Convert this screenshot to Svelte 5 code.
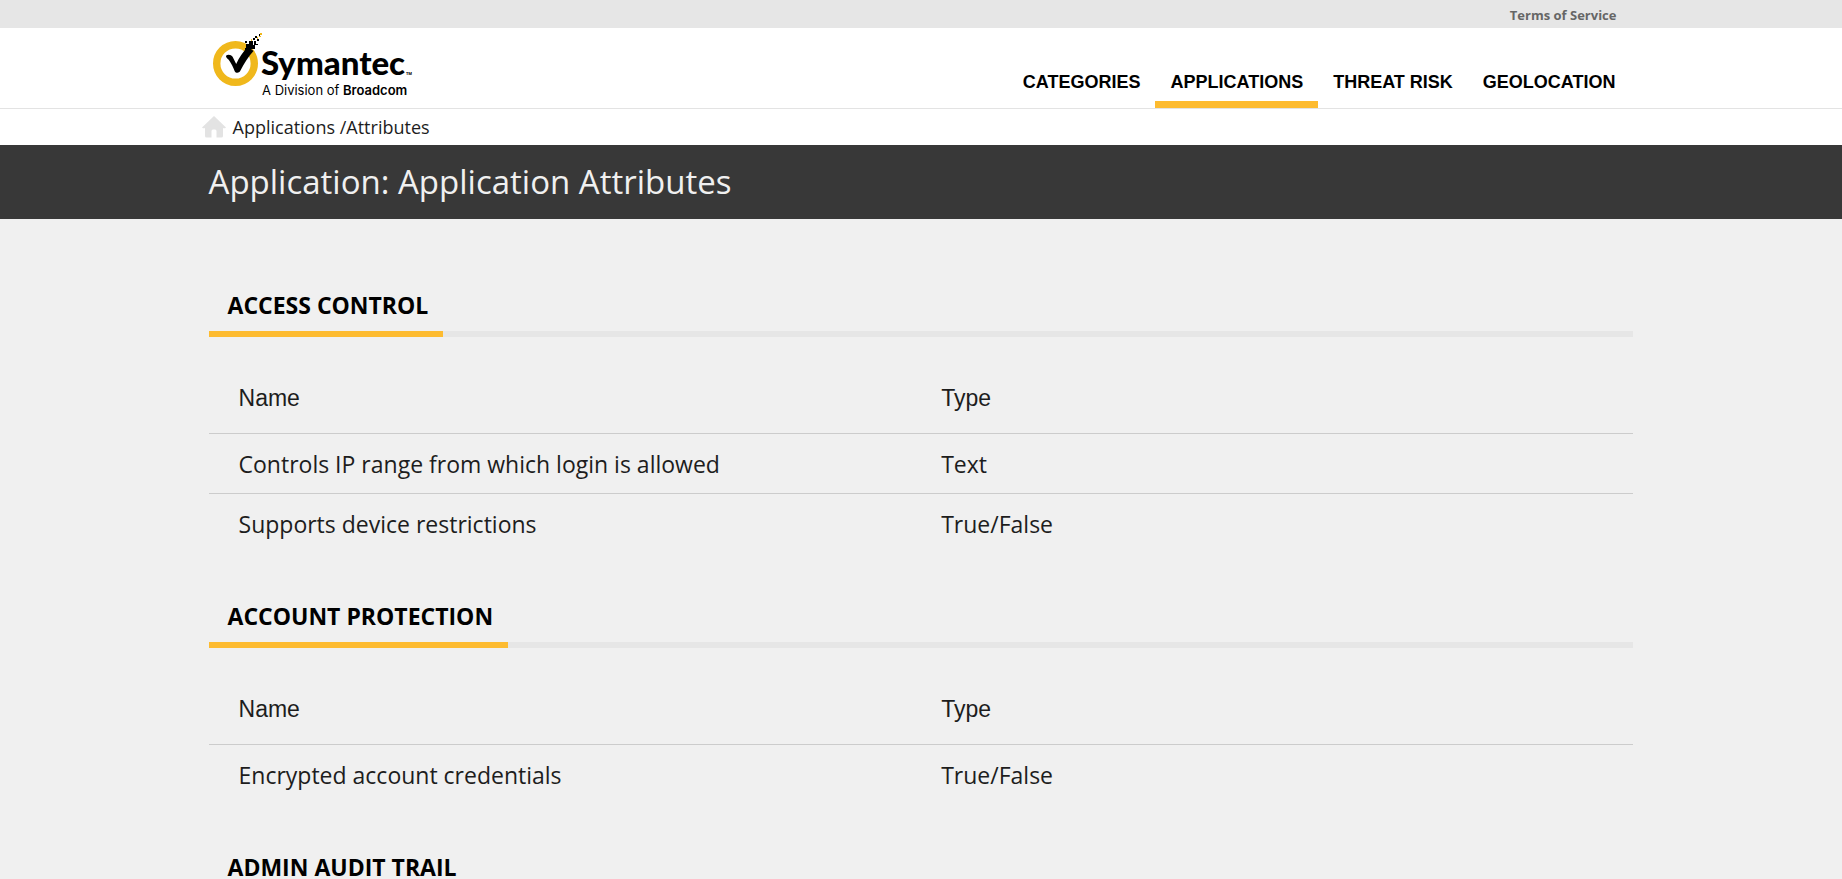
<script>
  const nav = [
    { label: 'CATEGORIES' },
    { label: 'APPLICATIONS', active: true },
    { label: 'THREAT RISK' },
    { label: 'GEOLOCATION' },
  ];

  const sections = [
    {
      title: 'ACCESS CONTROL',
      rows: [
        ['Controls IP range from which login is allowed', 'Text'],
        ['Supports device restrictions', 'True/False'],
      ],
    },
    {
      title: 'ACCOUNT PROTECTION',
      rows: [['Encrypted account credentials', 'True/False']],
    },
    { title: 'ADMIN AUDIT TRAIL', rows: [] },
  ];
</script>

<div class="page">
  <div class="topbar">
    <div class="wrap topbar-inner"><a href="#terms">Terms of Service</a></div>
  </div>

  <header>
    <div class="wrap header-inner">
      <a class="logo" href="#home" aria-label="Symantec, A Division of Broadcom">
        <svg width="206" height="72" viewBox="0 0 206 72">
          <circle cx="26.5" cy="35.500" r="18.8" fill="none" stroke="#f0b81c" stroke-width="7.4" />
          <path d="M17 27.800c1.600-1.700 5.200-1.400 6.600 1l3.600 7.200c3-6.800 6.500-11.500 11.800-17.500l5.500 4.500c-5.500 6-9 12-13.300 20-1.200 2.200-4.300 2.300-5.500.2-1.500-4-3.500-8.200-6-11.500-1.700-1.300-2.900-2.300-2.700-3.900z" fill="#000" />
          <g fill="#000">
            <rect x="37" y="16" width="4" height="4" /><rect x="40" y="13" width="4" height="4" />
            <rect x="41" y="17" width="5" height="4" /><rect x="36" y="20" width="6" height="3" />
            <rect x="45" y="13" width="2" height="4" /><rect x="44" y="10" width="2" height="2" />
            <rect x="48" y="11" width="2" height="2" /><rect x="46" y="8" width="2" height="2" />
            <rect x="36" y="13" width="2" height="2" /><rect x="47" y="16" width="2" height="1" />
            <rect x="50" y="6" width="1" height="2" />
          </g>
          <g fill="#f0b81c">
            <rect x="51" y="5" width="2" height="2" /><rect x="48" y="9" width="1" height="2" />
            <rect x="50" y="8" width="2" height="1" /><rect x="42" y="11" width="1" height="2" />
          </g>
          <text class="brand" x="52" y="47">Symantec</text>
          <text class="tm" x="197" y="47">TM</text>
          <text class="sub" x="53" y="67">A Division of <tspan class="strong">Broadcom</tspan></text>
        </svg>
      </a>
      <nav>
        {#each nav as item}
          <a href="#{item.label}" class:active={item.active}>{item.label}</a>
        {/each}
      </nav>
    </div>
  </header>

  <div class="crumbs">
    <div class="wrap crumbs-inner">
      <a href="#home" aria-label="Home">
        <svg width="24" height="22" viewBox="0 0 24 22">
          <path d="M12 0 24 11.500c-1 1-2 1-3 .6V20q0 1.500-1.500 1.500H14.500V15q0-1.500-1.500-1.500h-2Q9.500 13.500 9.500 15v6.500H4.500Q3 21.500 3 20v-7.900c-1 .4-2 .4-3-.6z" fill="#e3e3e3" />
        </svg>
      </a>
      <span><a href="#applications">Applications</a> /Attributes</span>
    </div>
  </div>

  <div class="title"><div class="wrap"><h1>Application: Application Attributes</h1></div></div>

  <main class="wrap">
    {#each sections as section}
      <section>
        <div class="tabline"><h2>{section.title}</h2></div>
        {#if section.rows.length}
          <table>
            <thead><tr><th>Name</th><th>Type</th></tr></thead>
            <tbody>
              {#each section.rows as row}
                <tr><td>{row[0]}</td><td>{row[1]}</td></tr>
              {/each}
            </tbody>
          </table>
        {/if}
      </section>
    {/each}
  </main>
</div>

<style>
  :global(body) { margin: 0; background: #f0f0f0; }
  .page {
    height: 100vh;
    overflow: hidden;
    font-family: "Open Sans", sans-serif;
    color: #1d1d1d;
  }
  .wrap { box-sizing: border-box; width: 77.360%; margin: 0 auto; }
  a { color: inherit; text-decoration: none; }
  .topbar { background: #e6e6e6; }
  .topbar-inner { display: flex; justify-content: flex-end; padding-right: 17px; }
  .topbar a { font-size: 13px; font-weight: 700; line-height: 28px; padding-top: 1px; margin-bottom: -1px; color: #666; }
  header { background: #fff; border-bottom: 1px solid #e3e3e3; }
  .header-inner { display: flex; justify-content: space-between; height: 80px; }
  .logo svg { display: block; }
  .brand { font: 900 33px Lato, sans-serif; }
  .tm { font: 700 4px "Open Sans", sans-serif; }
  .sub { font: 400 13px Inter, sans-serif; }
  .strong { font-weight: 600; }
  nav { display: flex; align-items: flex-end; padding-right: 3px; }
  nav a {
    padding: 0 15px 6px;
    border-bottom: 7px solid transparent;
    font: 700 18px/26px "Liberation Sans", Arial, sans-serif;
    color: #000;
  }
  nav a.active { border-color: #fdbb30; }
  .crumbs { background: #fff; }
  .crumbs-inner { display: flex; align-items: center; gap: 7px; height: 36px; }
  .crumbs-inner > a { margin-left: -7px; }
  .crumbs-inner svg { display: block; }
  .crumbs-inner span { font-size: 18px; line-height: 24px; }
  .title { background: #383838; }
  h1 { margin: 0; font: 400 33px/74px "Open Sans", sans-serif; color: #f0f0f0; }
  main { padding-top: 68px; }
  .tabline { display: flex; border-bottom: 6px solid #e6e6e6; }
  h2 {
    margin: 0 0 -6px;
    padding: 0 15px 8px 19px;
    border-bottom: 6px solid #fdbb30;
    font-size: 23px;
    line-height: 36px;
    font-weight: 700;
    color: #000;
  }
  table { width: 100%; border-collapse: collapse; table-layout: fixed; margin: 25px 0 45px; }
  th, td { padding: 0 30px; text-align: left; font-weight: 400; border-bottom: 1px solid #ccc; }
  th:first-child, td:first-child { width: 45.100%; }
  th { height: 71px; font: 400 23px/32px "Liberation Sans", Arial, sans-serif; }
  td { height: 59px; font-size: 23px; line-height: 32px; }
  tbody tr:last-child td { border-bottom: 0; }
</style>
